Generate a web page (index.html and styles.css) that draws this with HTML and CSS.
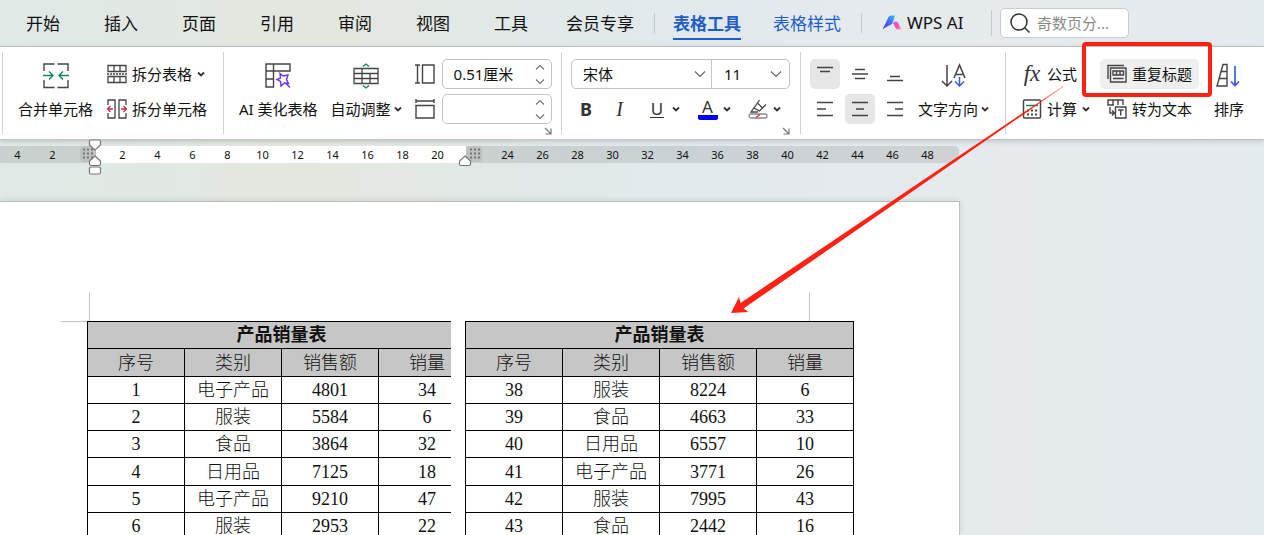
FILE: index.html
```html
<!doctype html>
<html lang="zh-CN">
  <head>
    <meta charset="UTF-8" />
    <meta name="viewport" content="width=device-width, initial-scale=1.0" />
    <title>产品销量表</title>
    <link rel="stylesheet" href="styles.css">
  </head>
  <body>
    <svg class="defs" aria-hidden="true">
      <symbol id="caret" viewBox="0 0 8 6"><path d="M1 1.5l3 3 3-3" fill="none" stroke="#333" stroke-width="1.8" /></symbol>
      <symbol id="chevron" viewBox="0 0 12 8"><path d="M1 1.5l5 5 5-5" fill="none" stroke="#666" stroke-width="1.2" /></symbol>
      <symbol id="spin" viewBox="0 0 10 20">
        <path d="M1 5.5l4-4 4 4M1 15.5l4 4 4-4" fill="none" stroke="#777" stroke-width="1.2" />
      </symbol>
      <symbol id="launcher" viewBox="0 0 8 8">
        <path d="M1 1l5.5 5.5M1.5 7H7V1.5" fill="none" stroke="#777" stroke-width="1.2" />
      </symbol>
    </svg>

    <header class="menu">
      <nav class="tabs">
        <a href="#">开始</a>
        <a href="#">插入</a>
        <a href="#">页面</a>
        <a href="#">引用</a>
        <a href="#">审阅</a>
        <a href="#">视图</a>
        <a href="#">工具</a>
      </nav>
      <a class="member" href="#">会员专享</a>
      <nav class="tabs context">
        <a class="active" href="#">表格工具</a>
        <a href="#">表格样式</a>
      </nav>
      <a class="ai" href="#">
        <svg width="20" height="16" viewBox="0 0 20 16">
          <defs>
            <linearGradient id="ai-a" x1="0" y1="1" x2="1" y2="0">
              <stop offset="0" stop-color="#3b3bff" />
              <stop offset=".5" stop-color="#4a63ff" />
              <stop offset="1" stop-color="#35c3ff" />
            </linearGradient>
            <linearGradient id="ai-b" x1="0" y1="0" x2="1" y2="1">
              <stop offset="0" stop-color="#c95cf5" />
              <stop offset=".6" stop-color="#ff4fae" />
              <stop offset="1" stop-color="#ffb199" />
            </linearGradient>
          </defs>
          <path d="M6.5 2Q7.500 .5 9 .5h4L10.500 8.500Q9 10 7 10.500Q4 12 .5 14.500z" fill="url(#ai-a)" />
          <path d="M11 8.500Q12 6 14.500 6.500Q16 7 16.500 8.500L19.500 14.500H15.500Q14 14 13 12z" fill="url(#ai-b)" />
        </svg>
        WPS AI
      </a>
      <label class="search">
        <svg width="20" height="20" viewBox="0 0 20 20" fill="none" stroke="#333" stroke-width="1.5">
          <circle cx="9" cy="9" r="8" />
          <path d="M14.500 14.500l5 5" />
        </svg>
        <input type="text" placeholder="奇数页分..." aria-label="搜索" />
      </label>
    </header>

    <section class="ribbon">
      <div class="group cells">
        <button class="big">
          <svg width="26" height="26" viewBox="0 0 26 26" fill="none" stroke-width="1.400">
            <path d="M11.500 1H1v7M14.500 1H25v7M1 17v7.500h10.500M25 17v7.500H14.500" stroke="#444" />
            <path d="M0 12.500h9.500M6 8.500l4 4-4 4M26 12.500h-9.500M20 8.500l-4 4 4 4" stroke="#12875a" />
          </svg>
          <span>合并单元格</span>
        </button>
        <div class="stack">
          <button class="row">
            <svg width="20" height="20" viewBox="0 0 20 20" fill="none" stroke="#444" stroke-width="1.300">
              <path d="M1 7.500V1.500h18v6zM7 1.500v6M13 1.500v6M1 12.500v6h18v-6zM7 12.500v6M13 12.500v6" />
              <path d="M0 10h20" stroke-dasharray="2 1" />
            </svg>
            <span>拆分表格</span>
            <svg class="caret"><use href="#caret" /></svg>
          </button>
          <button class="row">
            <svg width="20" height="20" viewBox="0 0 20 20" fill="none" stroke="#444" stroke-width="1.300">
              <path d="M1 6V1h7v18H1v-5M19 6V1h-7v18h7v-5" />
              <path d="M6 10H1M3.500 7L.5 10l3 3M14 10h5M16.500 7l3 3-3 3" stroke="#c4284c" />
            </svg>
            <span>拆分单元格</span>
          </button>
        </div>
      </div>

      <div class="group size">
        <button class="big">
          <svg width="26" height="26" viewBox="0 0 26 26" fill="none" stroke="#444" stroke-width="1.400">
            <path d="M1 1h24v7H1zM1 8v16h7.500V1M1 16h7.500" />
            <path d="M15 10.500l3 2.500 5-1-1.500 4.500 2 4-4-.5-3.500 3-.5-4.500-3.500-2 3.500-1.500zM20.500 20l4.500 4.500" stroke="#6a35e8" />
          </svg>
          <span>AI 美化表格</span>
        </button>
        <button class="big">
          <svg width="26" height="26" viewBox="0 0 26 26" fill="none" stroke="#444" stroke-width="1.300">
            <path d="M1 5.500h24v15H1zM1 10.500h24M1 15.500h24M9 5.500v15M17 10.500v10" />
            <path d="M10 3.500l3-2.500 3 2.500M10 22.500l3 2.500 3-2.500" stroke="#12875a" />
          </svg>
          <span class="drop">自动调整<svg class="caret"><use href="#caret" /></svg></span>
        </button>
        <div class="stack fields">
          <label class="field">
            <svg width="20" height="20" viewBox="0 0 20 20" fill="none" stroke="#444" stroke-width="1.400">
              <path d="M0 1h5M2.500 1v18M0 19h5M7.500 1H19v18H7.500z" />
            </svg>
            <span class="spinner">
              <input type="text" value="0.51厘米" aria-label="高度" />
              <svg width="10" height="20"><use href="#spin" /></svg>
            </span>
          </label>
          <label class="field">
            <svg width="20" height="20" viewBox="0 0 20 20" fill="none" stroke="#444" stroke-width="1.400">
              <path d="M1 0v4M1 2h18M19 0v4M1 6.500h18V19H1z" />
            </svg>
            <span class="spinner">
              <input type="text" value="" aria-label="宽度" />
              <svg width="10" height="20"><use href="#spin" /></svg>
            </span>
          </label>
          <button class="launcher" aria-label="表格属性"><svg width="8" height="8"><use href="#launcher" /></svg></button>
        </div>
      </div>

      <div class="group font">
        <div class="stack">
          <div class="font-box">
            <span class="select family">
              <select aria-label="字体"><option>宋体</option></select>
              <svg width="12" height="8"><use href="#chevron" /></svg>
            </span>
            <span class="select points">
              <select aria-label="字号"><option>11</option></select>
              <svg width="12" height="8"><use href="#chevron" /></svg>
            </span>
          </div>
          <div class="format">
            <button class="bold">B</button>
            <button class="italic">I</button>
            <button class="split"><span class="underline">U</span><svg class="caret"><use href="#caret" /></svg></button>
            <button class="split"><span class="color">A</span><svg class="caret"><use href="#caret" /></svg></button>
            <button class="split" aria-label="突出显示">
              <svg width="20" height="20" viewBox="0 0 20 20" fill="none" stroke="#444" stroke-width="1.300">
                <path d="M11.500 1L6 9l5.500 3L18 5.500M6.500 8L3 13h7M10 4.500l4 4" />
                <rect x="1" y="15" width="18" height="4" rx="2" stroke="#888" />
                <path d="M8 18.500l4-3" stroke="#d33" />
              </svg>
              <svg class="caret"><use href="#caret" /></svg>
            </button>
          </div>
          <button class="launcher" aria-label="字体设置"><svg width="8" height="8"><use href="#launcher" /></svg></button>
        </div>
      </div>

      <div class="group align">
        <div class="align-grid">
          <button class="on" aria-label="顶端对齐"><svg width="18" height="18" viewBox="0 0 18 18"><path d="M1 2.500h16M4 6.500h10" /></svg></button>
          <button aria-label="垂直居中"><svg width="18" height="18" viewBox="0 0 18 18"><path d="M4 4.500h10M1 9h16M4 13.500h10" /></svg></button>
          <button aria-label="底端对齐"><svg width="18" height="18" viewBox="0 0 18 18"><path d="M4 11.500h10M1 15.500h16" /></svg></button>
          <button aria-label="左对齐"><svg width="18" height="18" viewBox="0 0 18 18"><path d="M1 2.500h16M1 9h9M1 15.500h16" /></svg></button>
          <button class="on" aria-label="水平居中"><svg width="18" height="18" viewBox="0 0 18 18"><path d="M1 2.500h16M5 9h8M1 15.500h16" /></svg></button>
          <button aria-label="右对齐"><svg width="18" height="18" viewBox="0 0 18 18"><path d="M1 2.500h16M9 9h8M1 15.500h16" /></svg></button>
        </div>
        <button class="big">
          <svg width="26" height="26" viewBox="0 0 26 26" fill="none" stroke="#444" stroke-width="1.500">
            <path d="M6 2v21M1 18l5 5 5-5M13 15l5.500-13L24 15M14.500 11.500h8" />
            <path d="M18.500 14v9M14 18.500l4.500 4.500 4.500-4.500" stroke="#2b5be0" />
          </svg>
          <span class="drop">文字方向<svg class="caret"><use href="#caret" /></svg></span>
        </button>
      </div>

      <div class="group data">
        <div class="stack">
          <button class="row"><span class="fx">fx</span><span>公式</span></button>
          <button class="row">
            <svg width="20" height="20" viewBox="0 0 20 20" fill="none" stroke="#444" stroke-width="1.500">
              <rect x="1.500" y="1" width="17" height="18" rx="1" />
              <path d="M4 6.500h12" stroke="#12875a" />
              <path d="M5 11.500h10M5 15.500h10" stroke-width="2" stroke-dasharray="2 2" />
            </svg>
            <span>计算</span>
            <svg class="caret"><use href="#caret" /></svg>
          </button>
        </div>
        <div class="stack repeat">
          <button class="row hover">
            <svg width="20" height="20" viewBox="0 0 20 20" fill="none" stroke="#444" stroke-width="1.400">
              <path d="M1 15V1.500h16M3.500 4H19v14H3.500zM6 7h10.500v4H6zM9.500 7v4M13 7v4M6 14.500h10.500" />
            </svg>
            <span>重复标题</span>
            <i class="callout"></i>
          </button>
          <button class="row">
            <svg width="20" height="20" viewBox="0 0 20 20" fill="none" stroke="#444" stroke-width="1.400">
              <path d="M6 6H1V1h15v5M6 1v5M11 1v5M1 6h6M3 8v6h4M5 11.500l2.500 2.500L5 16.500M8.500 8H19v11H8.500zM11 11h5.500M13.700 11v5.500" />
            </svg>
            <span>转为文本</span>
          </button>
        </div>
        <button class="big">
          <svg width="26" height="26" viewBox="0 0 26 26" fill="none" stroke="#444" stroke-width="1.400">
            <path d="M7 1.500h4V23H1zM5.500 8.500H11M3.500 15.500H11" />
            <path d="M19 3v20M15 18.500l4 4 4-4" stroke="#2b5be0" stroke-width="1.600" />
          </svg>
          <span>排序</span>
        </button>
      </div>
    </section>

    <main class="workspace">
      <div class="ruler">
        <span>4</span><span>2</span><span></span><span>2</span><span>4</span><span>6</span><span>8</span><span>10</span><span>12</span><span>14</span><span>16</span><span>18</span><span>20</span><span></span><span>24</span><span>26</span><span>28</span><span>30</span><span>32</span><span>34</span><span>36</span><span>38</span><span>40</span><span>42</span><span>44</span><span>46</span><span>48</span>
        <svg class="marker start" width="24" height="38" viewBox="0 0 24 38">
          <rect x="0" y="7" width="16" height="16" rx="4" fill="#bfc1c0" />
          <path d="M3 10.500h12M3 14.500h12M3 18.500h12" stroke="#777" stroke-width="2" stroke-dasharray="2 2" />
          <g fill="#fff" stroke="#777" stroke-width="1.200">
            <path d="M11 1h8q1.500 0 1.500 1.500V6L15 11 9.500 6V2.500Q9.500 1 11 1z" />
            <path d="M15 17l5.500 5v3q0 1.500-1.500 1.500h-8q-1.500 0-1.500-1.500v-3z" />
            <rect x="9.500" y="28" width="11" height="7" rx="1.500" />
          </g>
        </svg>
        <svg class="marker end" width="24" height="38" viewBox="0 0 24 38">
          <rect x="7" y="7" width="16" height="16" rx="4" fill="#bfc1c0" />
          <path d="M11 10.500h10M11 14.500h10M11 18.500h10" stroke="#777" stroke-width="2" stroke-dasharray="2 2" />
          <path d="M6 17l5.500 5v3q0 1.500-1.500 1.500H2Q.5 26.500 .5 25v-3z" fill="#fff" stroke="#777" stroke-width="1.200" />
        </svg>
      </div>

      <article class="page">
        <div class="crop"><i class="crop-left"></i><i class="crop-right"></i></div>
        <div class="columns">
          <div class="clip">
            <table>
              <thead>
                <tr><th colspan="4">产品销量表</th></tr>
                <tr><td>序号</td><td>类别</td><td>销售额</td><td>销量</td></tr>
              </thead>
              <tbody>
                <tr><td>1</td><td>电子产品</td><td>4801</td><td>34</td></tr>
                <tr><td>2</td><td>服装</td><td>5584</td><td>6</td></tr>
                <tr><td>3</td><td>食品</td><td>3864</td><td>32</td></tr>
                <tr><td>4</td><td>日用品</td><td>7125</td><td>18</td></tr>
                <tr><td>5</td><td>电子产品</td><td>9210</td><td>47</td></tr>
                <tr><td>6</td><td>服装</td><td>2953</td><td>22</td></tr>
              </tbody>
            </table>
          </div>
          <table>
            <thead>
              <tr><th colspan="4">产品销量表</th></tr>
              <tr><td>序号</td><td>类别</td><td>销售额</td><td>销量</td></tr>
            </thead>
            <tbody>
              <tr><td>38</td><td>服装</td><td>8224</td><td>6</td></tr>
              <tr><td>39</td><td>食品</td><td>4663</td><td>33</td></tr>
              <tr><td>40</td><td>日用品</td><td>6557</td><td>10</td></tr>
              <tr><td>41</td><td>电子产品</td><td>3771</td><td>26</td></tr>
              <tr><td>42</td><td>服装</td><td>7995</td><td>43</td></tr>
              <tr><td>43</td><td>食品</td><td>2442</td><td>16</td></tr>
            </tbody>
          </table>
        </div>
      </article>
    </main>

    <svg class="arrow" width="334" height="228" viewBox="730 86 334 228">
      <defs>
        <linearGradient id="fade" x1="0" y1="1" x2="1" y2="0">
          <stop offset=".88" stop-color="#ff2113" />
          <stop offset="1" stop-color="#ff2113" stop-opacity=".4" />
        </linearGradient>
      </defs>
      <path d="M731 313l8-16 1.500 6L1063 86l.5 .8L743.500 308.500l5 3.500z" fill="url(#fade)" />
    </svg>
  </body>
</html>
```
FILE: styles.css
```css
html {
  height: 100%;
}

body {
  display: flex;
  flex-direction: column;
  position: relative;
  height: 100%;
  margin: 0;
  overflow: hidden;
  background: linear-gradient(90deg, #dfe9e6, #e3e7df 24%, #e1e9ec 52%, #e6eaed 80%, #e4ebee);
  color: #111;
  font: 15px/30px "Noto Sans", "Noto Sans CJK SC", sans-serif;
}

a {
  color: inherit;
  text-decoration: none;
}

button,
input,
select {
  margin: 0;
  padding: 0;
  border: 0;
  background: none;
  color: inherit;
  font: inherit;
}

svg {
  flex: none;
  overflow: visible;
}

.defs {
  position: absolute;
  width: 0;
  height: 0;
}

.caret {
  width: 8px;
  height: 6px;
}

/* menu bar */
.menu {
  display: flex;
  align-items: center;
  height: 46px;
  flex: none;
  padding-left: 26px;
  border-bottom: 1px solid #c3c9c9;
  font-size: 17px;
  white-space: nowrap;
}

.tabs {
  display: flex;
  gap: 44px;
}

.tabs a,
.member {
  padding-top: 2px;
  line-height: 28px;
}

.member {
  margin: 0 20px 0 38px;
}

.context {
  gap: 32px;
  padding: 0 20px 0 18px;
  color: #1f5ec9;
}

.context::before,
.context::after {
  content: "";
  align-self: center;
  width: 1px;
  height: 20px;
  background: #c4c9cc;
}

.context::before {
  margin: 0 -14px 0 -18px;
}

.context::after {
  margin: 0 -20px 0 -12px;
}

.active {
  font-weight: 700;
  box-shadow: 0 2px #1f5ec9;
}

.ai {
  display: flex;
  align-items: center;
  gap: 5px;
  width: 130px;
  margin-right: 8px;
  padding-left: 20px;
  line-height: 26px;
  border-right: 1px solid #c4c9cc;
  box-sizing: border-box;
}

.search {
  display: flex;
  align-items: center;
  gap: 7px;
  width: 129px;
  height: 30px;
  padding: 0 8px 0 9px;
  border: 1px solid #c9cdcf;
  border-radius: 5px;
  background: #fff;
  box-sizing: border-box;
  font-size: 15px;
}

.search input {
  width: 100%;
  min-width: 0;
}

.search input::placeholder {
  color: #8a8a8a;
}

/* ribbon */
.ribbon {
  display: flex;
  flex: none;
  height: 82px;
  padding: 5px 0 5px 2px;
  background: #fff;
  border-bottom: 1px solid #c3c7c9;
  box-shadow: 0 1px 5px rgba(0, 0, 0, 0.18);
  white-space: nowrap;
}

.group {
  display: flex;
  align-items: flex-start;
  padding-top: 7px;
  border-left: 1px solid #d0d0d0;
  box-sizing: border-box;
}

.big {
  display: grid;
  grid-template-rows: 30px 30px;
  gap: 5px;
  place-items: center;
}

.big > svg {
  margin-top: 4px;
}

.drop {
  display: flex;
  align-items: center;
  gap: 3px;
}

.stack {
  display: flex;
  flex-direction: column;
  gap: 5px;
}

.row {
  display: flex;
  align-items: center;
  gap: 5px;
  height: 30px;
}

.cells {
  width: 221px;
  gap: 14px;
  padding-left: 15px;
}

.size {
  width: 338px;
  gap: 13px;
  padding-left: 15px;
}

.field {
  display: flex;
  align-items: center;
  gap: 7px;
}

.spinner {
  display: flex;
  align-items: center;
  width: 110px;
  height: 30px;
  padding: 0 6px 0 11px;
  border: 1px solid #c4c4c4;
  border-radius: 5px;
  box-sizing: border-box;
}

.spinner input {
  flex: 1;
  min-width: 0;
}

.launcher {
  display: flex;
  align-self: flex-end;
  margin-top: -2px;
}

.font {
  width: 239px;
  padding-left: 9px;
}

.font-box {
  display: flex;
  width: 219px;
  height: 30px;
  border: 1px solid #c4c4c4;
  border-radius: 5px;
  box-sizing: border-box;
}

.select {
  display: flex;
  align-items: center;
  padding: 0 7px 0 12px;
}

.select select {
  flex: 1;
  min-width: 0;
  margin-right: -12px;
  line-height: 28px;
  appearance: none;
}

.select svg {
  pointer-events: none;
}

.family {
  flex: 1;
  border-right: 1px solid #c4c4c4;
  padding: 0 5px 0 11px;
}

.points {
  width: 58px;
}

.format {
  display: flex;
  align-items: center;
  justify-content: space-between;
  height: 30px;
  padding: 0 9px;
  color: #333;
  font-size: 18px;
}

.bold {
  width: 12px;
  font-weight: 700;
}

.italic {
  width: 20px;
  font-family: "Liberation Serif", serif;
  font-style: italic;
  font-size: 20px;
}

.split {
  display: flex;
  align-items: center;
  gap: 5px;
}

.underline,
.color {
  width: 14px;
  margin: 0 3px;
  font-size: 17px;
  line-height: 17px;
  text-align: center;
  border-bottom: 1px solid #333;
}

.color {
  width: 20px;
  margin: 0;
  line-height: 16px;
  border-bottom: 5px solid #0000f0;
  border-radius: 2px;
}

.align {
  width: 205px;
  gap: 8px;
  padding-left: 9px;
}

.align-grid {
  display: grid;
  grid-template-columns: repeat(3, 30px);
  gap: 5px;
}

.align-grid button {
  display: grid;
  place-items: center;
  height: 30px;
  border-radius: 5px;
}

.align-grid path {
  fill: none;
  stroke: #444;
  stroke-width: 1.5;
}

.align-grid .on {
  background: #e6e6e6;
}

.data {
  flex: 1;
  padding-left: 16px;
}

.fx {
  width: 20px;
  font: italic 23px/24px "Liberation Serif", serif;
  color: #333;
}

.repeat {
  margin: 0 15px 0 10px;
}

.repeat .row {
  position: relative;
  padding: 0 7px;
}

.hover {
  background: #efefef;
  border-radius: 5px;
}

.callout {
  position: absolute;
  inset: -17px -13px -8px -18px;
  border: 4px solid #ff2113;
  border-radius: 4px;
}

/* document */
.workspace {
  display: flex;
  flex-direction: column;
  flex: 1;
  min-height: 0;
  padding-top: 6px;
}

.ruler {
  display: flex;
  flex: none;
  position: relative;
  width: 945px;
  height: 17px;
  padding-right: 14px;
  border-radius: 0 5px 5px 0;
  background: linear-gradient(90deg, rgba(0, 0, 0, 0.1) 95px, #fff 95px 466px, rgba(0, 0, 0, 0.1) 466px);
  font-size: 11px;
  line-height: 17px;
}

.ruler span {
  flex: 1;
  text-align: center;
}

.marker {
  position: absolute;
  top: -7px;
}

.start {
  left: 80px;
}

.end {
  left: 459px;
}

.page {
  flex: 1;
  width: 959px;
  min-height: 0;
  margin-top: 38px;
  padding-top: 90px;
  overflow: hidden;
  background: #fff;
  border: solid #b9bebf;
  border-width: 1px 1px 0 0;
  box-shadow: 0 0 6px rgba(0, 0, 0, 0.12);
}

.crop {
  display: flex;
  justify-content: space-between;
  width: 749px;
  height: 30px;
  margin: 0 0 -1px 61px;
}

.crop-left {
  width: 28px;
  border: solid #c4c4c4;
  border-width: 0 1px 1px 0;
}

.crop-right {
  border-right: 1px solid #c4c4c4;
}

.columns {
  display: flex;
  position: relative;
  gap: 14px;
  padding-left: 87px;
}

.clip {
  width: 364px;
  overflow: hidden;
}

table {
  width: 389px;
  table-layout: fixed;
  border-collapse: collapse;
  background: #fff;
  font: 18px/26px "Liberation Serif", "Noto Sans CJK SC", serif;
  text-align: center;
}

tr {
  height: 27px;
}

thead tr:nth-child(2),
tbody tr:nth-child(4n) {
  height: 28px;
}

thead {
  background: #c6c6c6;
}

th,
td {
  padding: 0;
  border: 1px solid #000;
}

td {
  font-weight: 300;
}

.arrow {
  position: absolute;
  top: 86px;
  left: 730px;
  pointer-events: none;
}
```
